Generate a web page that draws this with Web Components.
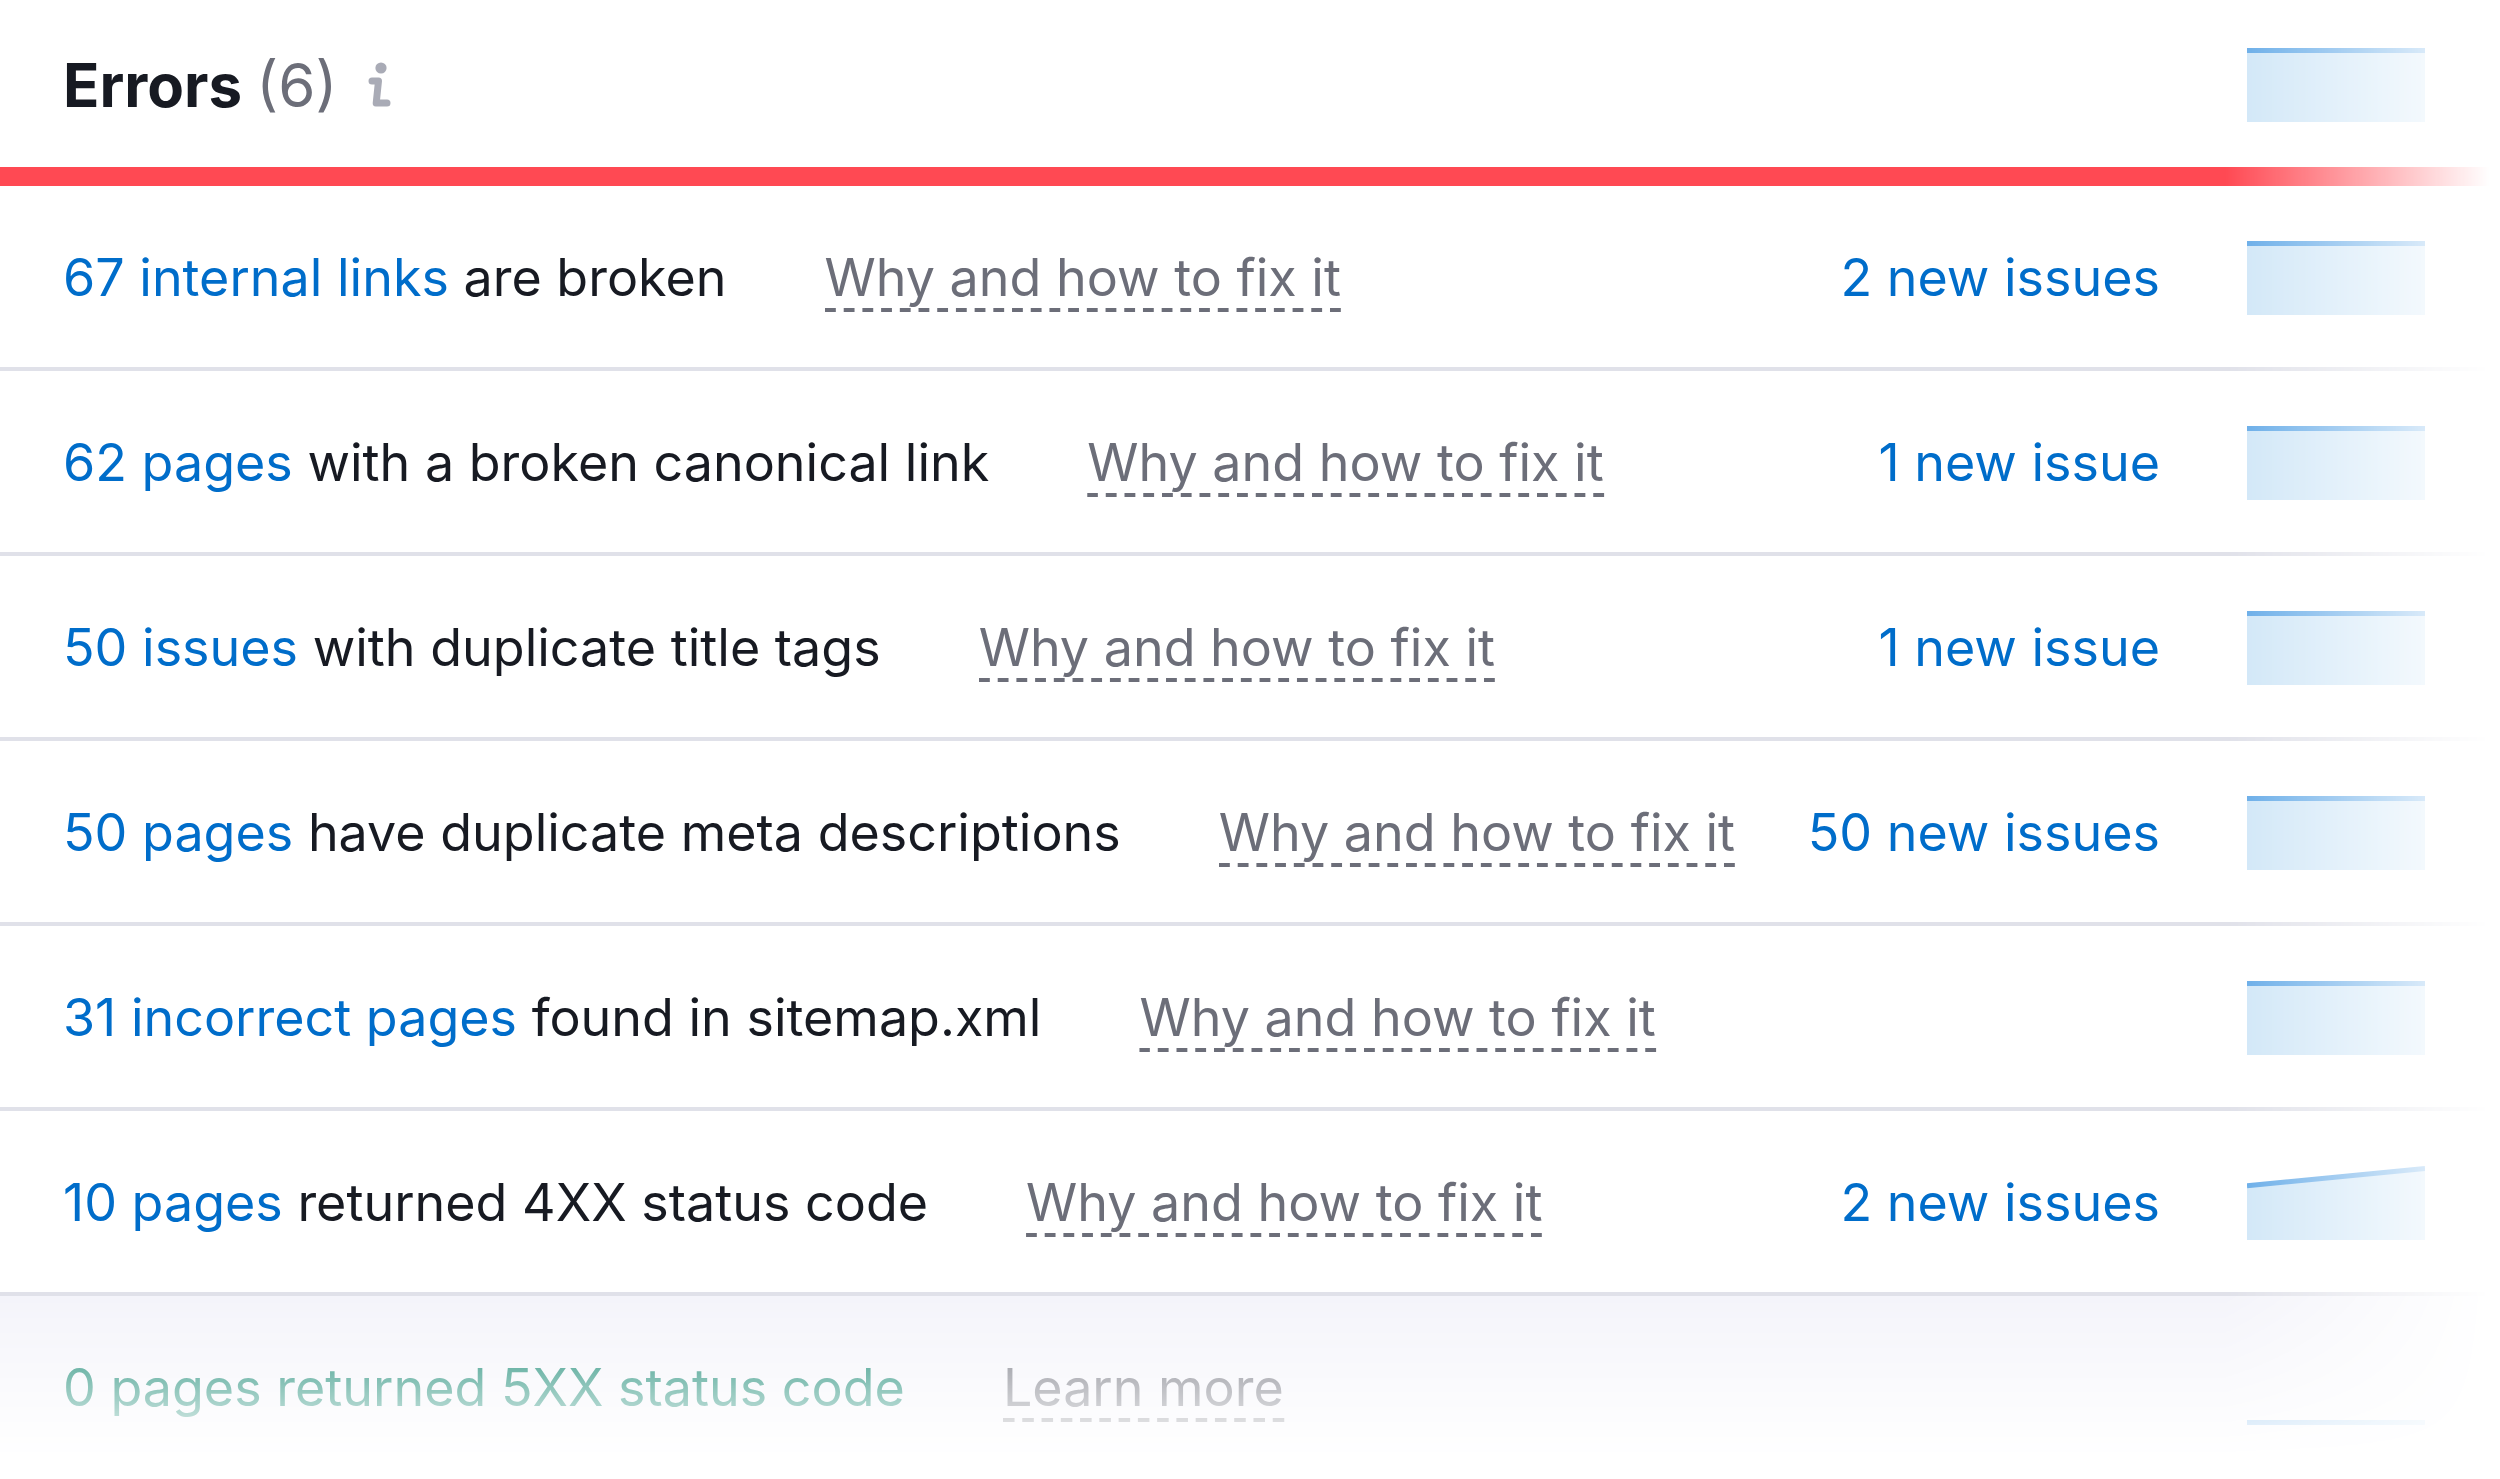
<!DOCTYPE html>
<html lang="en">
<head>
<meta charset="utf-8">
<title>Errors</title>
<style>
  body {
    margin: 0;
    background: #fff;
    color: #171a22;
    font-family: Inter, "Liberation Sans", sans-serif;
    font-size: 52px;
    line-height: 60px;
    font-optical-sizing: none;
  }
</style>
</head>
<body>

<issue-list>
  <issue-header slot="header" count="6">Errors</issue-header>
  <issue-row subject="67 internal links" fresh="2 new issues" trend="1,1">are broken</issue-row>
  <issue-row subject="62 pages" fresh="1 new issue" trend="1,1">with a broken canonical link</issue-row>
  <issue-row subject="50 issues" fresh="1 new issue" trend="1,1">with duplicate title tags</issue-row>
  <issue-row subject="50 pages" fresh="50 new issues" trend="1,1">have duplicate meta descriptions</issue-row>
  <issue-row subject="31 incorrect pages" trend="1,1">found in sitemap.xml</issue-row>
  <issue-row subject="10 pages" fresh="2 new issues" trend="0.75,1">returned 4XX status code</issue-row>
  <issue-row passed help="Learn more" trend="0,0">0 pages returned 5XX status code</issue-row>
</issue-list>

<script>
'use strict';

/*
trend-chart: small area chart, trend is a comma separated list of values 0..1
*/
customElements.define('trend-chart', class TrendChart extends HTMLElement {
  constructor() {
    super();
    this.attachShadow({ mode: 'open' });
  }

  connectedCallback() {
    const w = 178, h = 74, stroke = 5;
    const values = (this.getAttribute('trend') || '0').split(',').map(parseFloat);
    const step = w / (values.length - 1);
    // keep the line inside the box at both ends of the scale
    const points = values.map((v, i) => [i * step, stroke / 2 + (1 - v) * (h - stroke)].join(' '));
    const line = points.join(' L');
    const area = Math.max(...values) > 0 ? `<path class="area" d="M${line} L${w} ${h} L0 ${h} Z"/>` : '';

    this.shadowRoot.innerHTML = `
<style>
  :host { display: block; flex: none; width: ${w}px; height: ${h}px; }
  svg { display: block; }
  .area { fill: #cfe6f7; }
  .line { fill: none; stroke: #62a9e7; stroke-width: ${stroke}px; }
</style>
<svg width="${w}" height="${h}" viewBox="0 0 ${w} ${h}" aria-hidden="true">
  ${area}
  <path class="line" d="M${line}"/>
</svg>
`;
  }
});

const headerTemplate = document.createElement('template');
headerTemplate.innerHTML = `
<style>
  :host {
    display: flex;
    align-items: center;
    box-sizing: border-box;
    min-height: 186px;
    padding: 3px 75px 0 63px;
    border-bottom: 19px solid #ff4953;
    font-size: 60px;
    line-height: 72px;
  }
  h2 { margin: 0; font-size: inherit; font-weight: 700; }
  .count { font-weight: 400; color: #6c6e79; }
  button {
    display: flex;
    margin: 0 auto 0 28px;
    padding: 0;
    border: 0;
    background: none;
    color: #a9abb6;
    cursor: pointer;
  }
</style>
<h2><slot></slot> <span class="count"></span></h2>
<button type="button" aria-label="About errors">
  <svg width="28" height="46" viewBox="0 0 28 46" aria-hidden="true">
    <circle cx="16" cy="6" r="5.6" fill="currentColor"/>
    <path d="M7 19H13.500L11.200 41H22" fill="none" stroke="currentColor" stroke-width="7" stroke-linecap="round" stroke-linejoin="round"/>
  </svg>
</button>
<trend-chart trend="1,1"></trend-chart>
`;

customElements.define('issue-header', class IssueHeader extends HTMLElement {
  constructor() {
    super();
    this.attachShadow({ mode: 'open' });
    this.shadowRoot.appendChild(headerTemplate.content.cloneNode(true));
  }

  connectedCallback() {
    this.shadowRoot.querySelector('.count').textContent = `(${this.getAttribute('count')})`;
  }
});

const rowTemplate = document.createElement('template');
rowTemplate.innerHTML = `
<style>
  :host {
    display: flex;
    align-items: center;
    box-sizing: border-box;
    min-height: 185px;
    padding: 3px 75px 0 63px;
    border-bottom: 4px solid #e0e1e9;
    white-space: nowrap;
  }
  :host([passed]) { background: #f4f4fa; color: #007c65; border-bottom-color: transparent; }
  a { color: #006dca; text-decoration: none; }
  .help { position: relative; margin: 0 auto 0 98px; color: #6c6e79; }
  /* dashed rule; the last gap hangs past the text so that it ends on a dash */
  .help::after {
    content: "";
    position: absolute;
    top: 100%;
    left: 0;
    right: -8px;
    height: 4px;
    background: linear-gradient(90deg, currentColor 60%, transparent 60%) 0 0 / 19px 4px round;
    clip-path: inset(0 5px 0 0);
  }
  .fresh { margin-right: 87px; }
</style>
<span class="title"><a class="subject" href="#"></a> <slot></slot></span>
<a class="help" href="#"></a>
<a class="fresh" href="#"></a>
<trend-chart></trend-chart>
`;

customElements.define('issue-row', class IssueRow extends HTMLElement {
  constructor() {
    super();
    this.attachShadow({ mode: 'open' });
    const content = rowTemplate.content.cloneNode(true);
    content.querySelector('trend-chart').setAttribute('trend', this.getAttribute('trend'));
    this.shadowRoot.appendChild(content);
  }

  connectedCallback() {
    this.setAttribute('role', 'listitem');
    this.fill('.subject', this.getAttribute('subject'));
    this.fill('.help', this.getAttribute('help') || 'Why and how to fix it');
    this.fill('.fresh', this.getAttribute('fresh'));
  }

  // links without a text are dropped
  fill(selector, text) {
    const el = this.shadowRoot.querySelector(selector);
    if (!el) return;
    if (text) el.textContent = text;
    else el.remove();
  }
});

const listTemplate = document.createElement('template');
listTemplate.innerHTML = `
<style>
  /* fades out to the right, and to the bottom over the last row */
  :host {
    display: block;
    overflow: hidden;
    mask-image:
      linear-gradient(to left, transparent 10px, #000 275px),
      linear-gradient(to top, transparent 22px, #000 185px);
    mask-composite: intersect;
  }
</style>
<slot name="header"></slot>
<div role="list"><slot></slot></div>
`;

customElements.define('issue-list', class IssueList extends HTMLElement {
  constructor() {
    super();
    this.attachShadow({ mode: 'open' });
    this.shadowRoot.appendChild(listTemplate.content.cloneNode(true));
  }
});
</script>
</body>
</html>
